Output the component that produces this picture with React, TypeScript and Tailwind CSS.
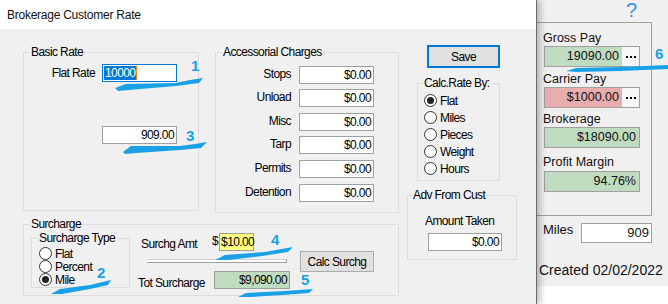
import type { ReactNode } from 'react'

const ACCESSORIALS = [
  { label: 'Stops', mt: 'mt-[7px]' },
  { label: 'Unload', mt: 'mt-[5px]' },
  { label: 'Misc', mt: 'mt-[6px]' },
  { label: 'Tarp', mt: 'mt-[5px]' },
  { label: 'Permits', mt: 'mt-[6px]' },
  { label: 'Detention', mt: 'mt-[6px]' },
]

const CALC_BY = ['Flat', 'Miles', 'Pieces', 'Weight', 'Hours']

const MARKS = [
  { n: '1', cls: 'left-[191px] top-[58px]' },
  { n: '2', cls: 'left-[97px] top-[265px]' },
  { n: '3', cls: 'left-[186px] top-[128px]' },
  { n: '4', cls: 'left-[271px] top-[232px]' },
  { n: '5', cls: 'left-[301px] top-[272px]' },
  { n: '6', cls: 'left-[655px] top-[46px]' },
]

function GroupBox({
  label,
  className = '',
  legendClass = '',
  children,
}: {
  label: string
  className?: string
  legendClass?: string
  children?: ReactNode
}) {
  return (
    <fieldset className={`border border-[#dcdcdc] shrink-0 ${className}`}>
      <legend className={`px-[1px] leading-[14px] ${legendClass}`}>{label}</legend>
      {children}
    </fieldset>
  )
}

function TextBox({ value, className = '' }: { value: string; className?: string }) {
  return (
    <div
      className={`h-[18px] border border-[#a0a0a0] flex items-center justify-end pr-[2px] shrink-0 ${className}`}
    >
      {value}
    </div>
  )
}

function Radio({ label, checked, className = '' }: { label: string; checked?: boolean; className?: string }) {
  return (
    <div className={`flex items-center ${className}`}>
      <span className="w-[13px] h-[13px] rounded-full border border-[#333] bg-white flex items-center justify-center shrink-0">
        {checked && <span className="w-[7px] h-[7px] rounded-full bg-[#222]" />}
      </span>
      <span className="ml-[3px]">{label}</span>
    </div>
  )
}

function PayField({ value, color, more }: { value: string; color: string; more?: boolean }) {
  return (
    <div className={`ml-[1px] w-[96px] h-[21px] border border-[#a0a0a0] flex ${color}`}>
      <div className="flex-1 flex items-center justify-end pr-[3px]">{value}</div>
      {more && (
        <div className="w-[17px] bg-[#f7f7f7] flex items-center justify-center gap-[2px]">
          <span className="w-[2px] h-[2px] bg-black" />
          <span className="w-[2px] h-[2px] bg-black" />
          <span className="w-[2px] h-[2px] bg-black" />
        </div>
      )}
    </div>
  )
}

export default function App() {
  return (
    <div className="relative flex w-[668px] h-[304px] overflow-hidden bg-[#f0f0f0] font-['Liberation_Sans',Arial,sans-serif] text-black">
      {/* Dialog */}
      <div className="relative z-10 w-[537px] shrink-0 flex flex-col border-r border-[#6b6b6b] bg-[#f0f0f0] shadow-[3px_0_7px_rgba(0,0,0,0.28)] text-[12px] tracking-[-0.6px]">
        <div className="h-[29px] bg-white pl-[7px] flex items-center text-[12px] tracking-[-0.25px] text-[#111]">
          Brokerage Customer Rate
        </div>

        <div className="flex pl-[23px] pt-[16px]">
          {/* left column */}
          <div className="flex flex-col w-[376px]">
            <div className="flex items-start gap-[16px]">
              <GroupBox label="Basic Rate" className="w-[176px] h-[166px]" legendClass="ml-[6px]">
                <div className="mt-[5px] flex items-center h-[18px]">
                  <span className="w-[71px] text-right">Flat Rate</span>
                  <div className="ml-[7px] w-[75px] h-[18px] border border-[#0078d7] bg-white flex items-center pl-[1px]">
                    <span className="bg-[#0078d7] text-white leading-[14px] px-[1px]">10000</span>
                    <span className="w-[1px] h-[14px] bg-[#ff8a00]" />
                  </div>
                </div>
                <TextBox value="909.00" className="mt-[44px] ml-[78px] w-[75px] bg-white" />
              </GroupBox>

              <GroupBox label="Accessorial Charges" className="w-[184px] h-[168px]" legendClass="ml-[6px]">
                {ACCESSORIALS.map((a) => (
                  <div key={a.label} className={`flex items-center h-[18px] ${a.mt}`}>
                    <span className="w-[75px] text-right -mt-[2px]">{a.label}</span>
                    <TextBox value="$0.00" className="ml-[8px] w-[75px] bg-white" />
                  </div>
                ))}
              </GroupBox>
            </div>

            <GroupBox label="Surcharge" className="mt-[4px] w-[376px] h-[79px]" legendClass="ml-[6px]">
              <div className="flex items-start">
                <GroupBox label="Surcharge Type" className="ml-[7px] w-[99px] h-[57px]" legendClass="ml-[6px]">
                  <div className="mt-[2px] ml-[7px] flex flex-col">
                    <Radio label="Flat" className="h-[13px]" />
                    <Radio label="Percent" className="h-[13px]" />
                    <Radio label="Mile" checked className="h-[13px]" />
                  </div>
                </GroupBox>

                <div className="ml-[8px] w-[152px] flex flex-col">
                  <div className="mt-[2px] h-[18px] flex items-start">
                    <span className="ml-[3px] mt-[4px] w-[71px] leading-[14px]">Surchg Amt</span>
                    <span className="mt-[1px] leading-[14px]">$</span>
                    <div className="ml-[1px] w-[35px] h-[18px] border border-[#a0a0a0] bg-[#ffff80] flex items-center pl-[1px]">
                      $10.00
                    </div>
                  </div>
                  <div className="mt-[8px] ml-[9px] w-[140px] h-[4px] bg-white border-t border-t-[#d4d4d4] border-b border-r border-[#a0a0a0]" />
                  <div className="mt-[8px] h-[18px] flex items-start">
                    <span className="w-[76px] mt-[5px] leading-[14px]">Tot Surcharge</span>
                    <TextBox value="$9,090.00" className="w-[76px] bg-[#c0dcc0]" />
                  </div>
                </div>

                <button className="ml-[10px] mt-[20px] w-[74px] h-[21px] border border-[#adadad] bg-[#e1e1e1] flex items-center justify-center">
                  Calc Surchg
                </button>
              </div>
            </GroupBox>
          </div>

          {/* right column */}
          <div className="ml-[8px] w-[110px] flex flex-col">
            <button className="ml-[20px] w-[73px] h-[23px] border-2 border-[#0078d7] bg-[#e1e1e1] flex items-center justify-center">
              Save
            </button>
            <GroupBox label="Calc.Rate By:" className="mt-[8px] ml-[10px] w-[83px] h-[105px]" legendClass="ml-[5px]">
              <div className="mt-[2px] ml-[6px] flex flex-col">
                {CALC_BY.map((c, i) => (
                  <Radio key={c} label={c} checked={i === 0} className="h-[17px]" />
                ))}
              </div>
            </GroupBox>
            <GroupBox label="Adv From Cust" className="mt-[7px] w-[110px] h-[72px]" legendClass="ml-[4px]">
              <div className="mt-[12px] ml-[17px] leading-[14px]">Amount Taken</div>
              <TextBox value="$0.00" className="mt-[5px] ml-[20px] w-[74px] bg-white" />
            </GroupBox>
          </div>
        </div>
      </div>

      {/* Background form */}
      <div className="flex-1 flex flex-col text-[12.5px] text-[#111]">
        <div className="h-[22px] pl-[89px] text-[20px] leading-[20px] text-[#3a8ee6]">?</div>
        <div className="mr-[16px] h-[194px] border border-l-0 border-[#a0a0a0] pl-[6px] flex flex-col leading-[15px]">
          <div className="mt-[8px]">Gross Pay</div>
          <PayField value="19090.00" color="bg-[#c0dcc0]" more />
          <div className="mt-[5px]">Carrier Pay</div>
          <PayField value="$1000.00" color="bg-[#e8adad]" more />
          <div className="mt-[4px]">Brokerage</div>
          <PayField value="$18090.00" color="bg-[#c0dcc0]" />
          <div className="mt-[7px]">Profit Margin</div>
          <div className="mt-[1px]">
            <PayField value="94.76%" color="bg-[#c0dcc0]" />
          </div>
        </div>
        <div className="mt-[7px] pl-[6px] flex items-start text-[13px]">
          <span className="w-[38px] -mt-[1px] leading-[15px]">Miles</span>
          <div className="w-[71px] h-[20px] border border-[#a0a0a0] bg-white flex items-center justify-end pr-[2px]">
            909
          </div>
        </div>
        <div className="mt-[19px] pl-[2px] text-[14px] leading-[16px]">Created 02/02/2022</div>
        <div className="mt-[8px] flex-1 bg-white" />
      </div>

      {/* Blue annotation marks drawn over the screenshot */}
      <svg className="absolute inset-0 z-20 pointer-events-none" width="668" height="304" viewBox="0 0 668 304">
        <g fill="#1aa0e6">
          <polygon points="115,88 126,84 175,83 190,80 203,78 199,83 176,86 140,89 118,91" />
          <polygon points="123,152 131,146 180,146 195,144 207,142 201,148 180,150 136,153 125,154" />
          <polygon points="51,294 60,289 90,285 111,280 108,285 90,289 62,294" />
          <polygon points="215,260 225,255 265,252 293,247 288,252 262,256 228,260" />
          <polygon points="238,297 246,293 285,291 313,289 309,293 282,295 250,297" />
          <polygon points="566,71 576,68 620,67 668,65 668,69 620,71 576,72" />
        </g>
      </svg>
      {MARKS.map((m) => (
        <span
          key={m.n}
          className={`absolute z-20 text-[15px] leading-none font-bold text-[#1aa0e6] ${m.cls}`}
        >
          {m.n}
        </span>
      ))}
    </div>
  )
}
